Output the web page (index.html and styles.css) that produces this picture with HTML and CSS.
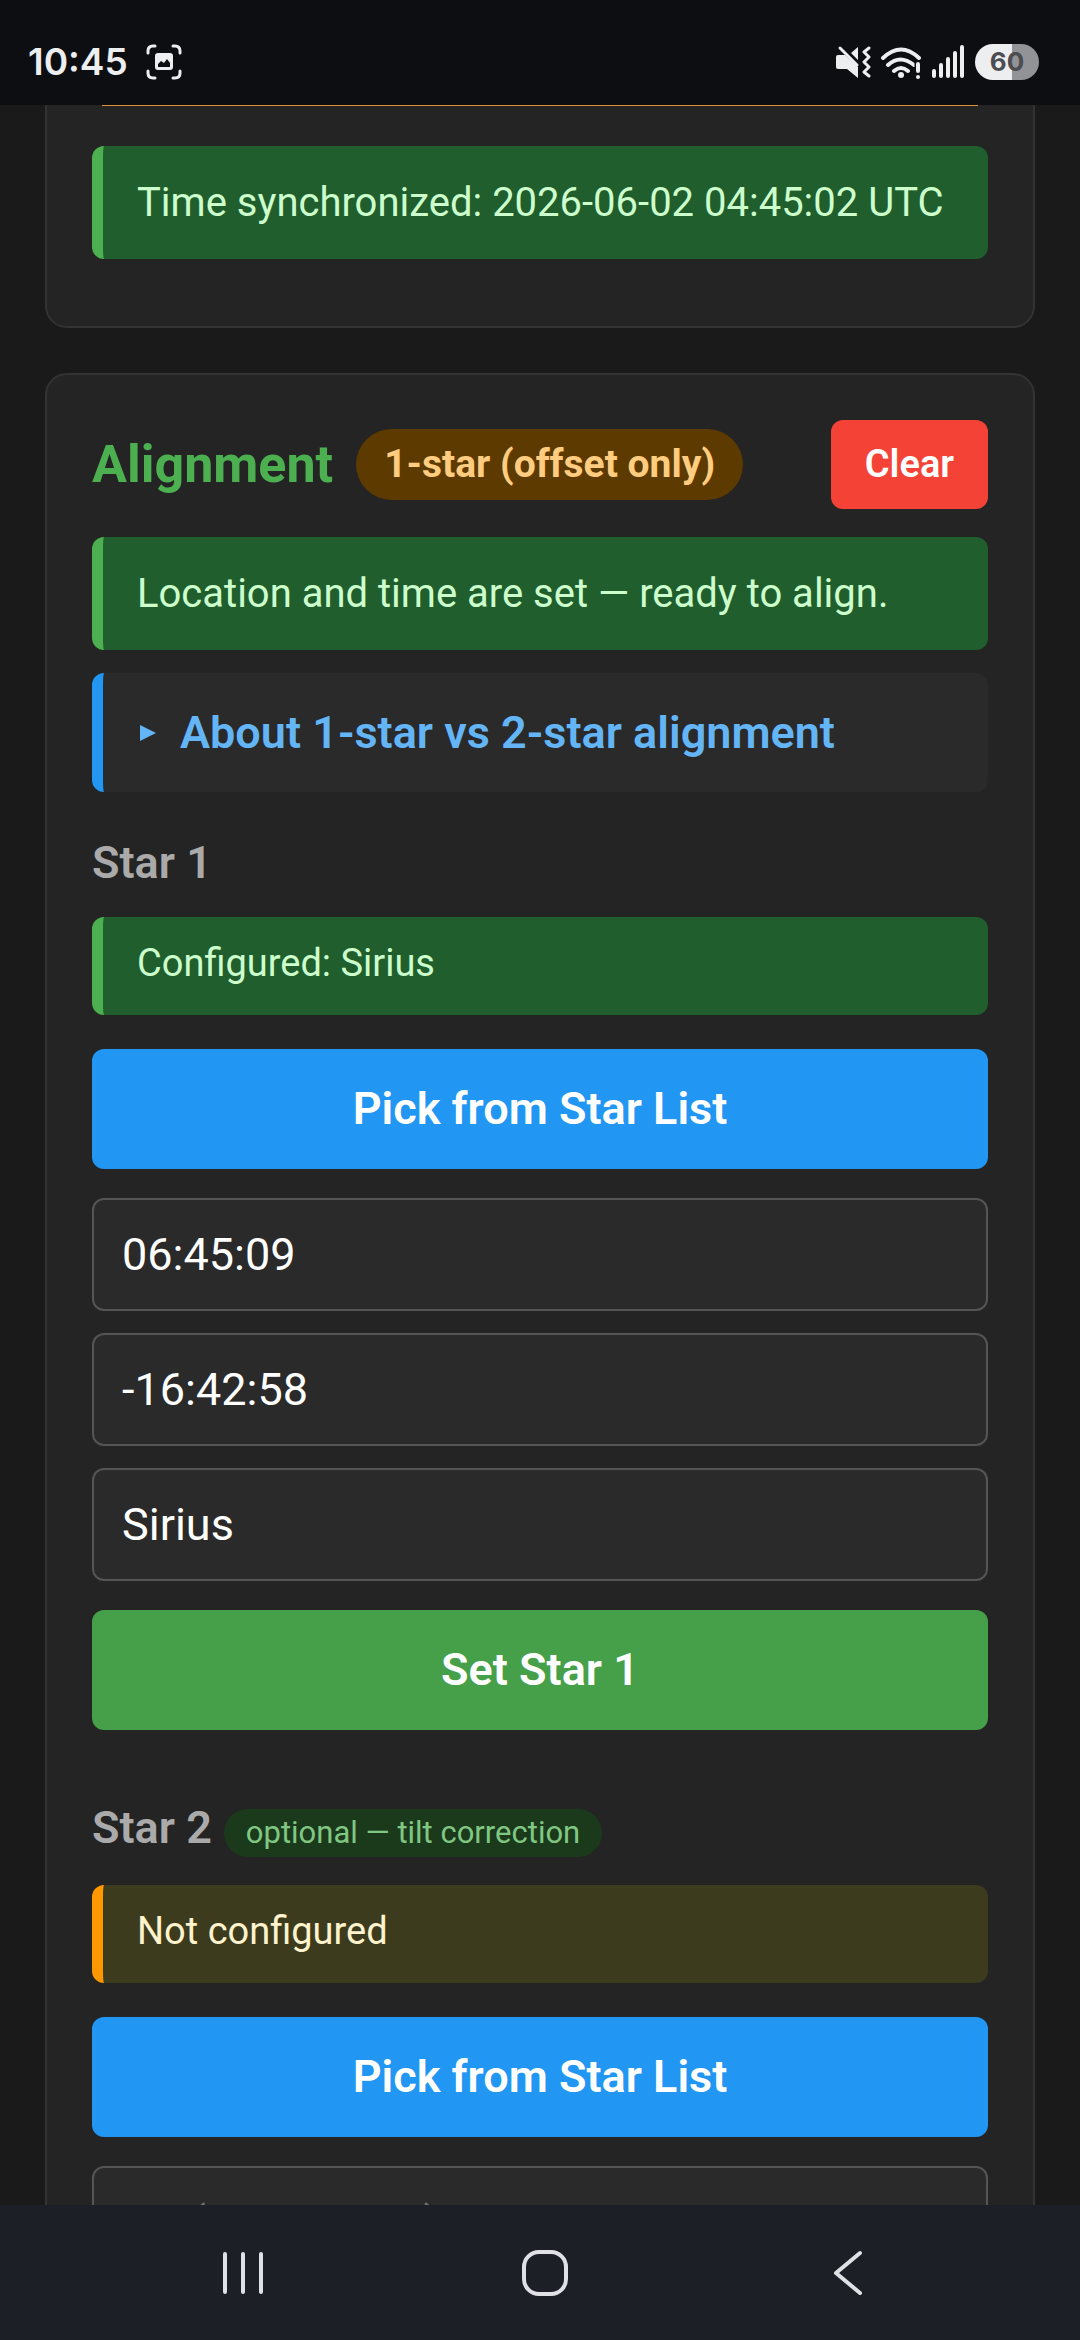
FILE: index.html
```
<!DOCTYPE html>
<html lang="en">
<head>
    <meta charset="UTF-8">
    <meta name="viewport" content="width=device-width, initial-scale=1.0">
    <title>Alignment</title>
    <link rel="stylesheet" href="styles.css">
</head>
<body>
    <header class="status-bar">
        <div class="status-left">
            <span class="clock">10:45</span>
            <svg width="36" height="36" viewBox="0 0 36 36" aria-hidden="true">
                <g fill="none" stroke="#eceef0" stroke-width="3" stroke-linecap="round">
                    <path d="M2 9V7q0-5 5-5h2M27 2h2q5 0 5 5v2M34 27v2q0 5-5 5h-2M9 34H7q-5 0-5-5v-2"/>
                </g>
                <path fill="#eceef0" fill-rule="evenodd" d="M12 9h12q3 0 3 3v11q0 3-3 3H12q-3 0-3-3V12q0-3 3-3zM12 23h12v-4l-3-4-3 4-3-2-3 3z"/>
            </svg>
        </div>
        <div class="status-right">
            <svg width="36" height="36" viewBox="0 0 36 36" aria-hidden="true">
                <path fill="#eceef0" d="M3 11h7l13 12v11l-11-9H3q-2 0-2-2V13q0-2 2-2zM16 9l7-6v13z"/>
                <path fill="none" stroke="#eceef0" stroke-width="3" stroke-linecap="round" d="M5 4l17 17"/>
                <path fill="none" stroke="#eceef0" stroke-width="3" stroke-linecap="round" stroke-linejoin="round" d="M34 4l-5 4 5 5-5 5 5 5-5 5 5 4"/>
            </svg>
            <svg width="40" height="36" viewBox="0 0 40 36" aria-hidden="true">
                <g fill="none" stroke="#eceef0" stroke-width="4" stroke-linecap="round">
                    <path d="M2 14Q20-3 38 14M7 21q12-11 26 0M13 27q7-6 14 0"/>
                </g>
                <circle cx="20" cy="31" r="3" fill="#eceef0"/>
                <path d="M37 17v18" stroke="#0d0e12" stroke-width="7"/>
                <path d="M37 20v7M37 33v0" stroke="#eceef0" stroke-width="4" stroke-linecap="round"/>
            </svg>
            <svg width="34" height="36" viewBox="0 0 34 36" aria-hidden="true">
                <path fill="none" stroke="#eceef0" stroke-width="4" stroke-linecap="round" d="M3 27v5M10 21v11M17 15v17M24 9v23M31 3v29"/>
            </svg>
            <span class="battery">60</span>
        </div>
    </header>

    <main class="content">
        <section class="card card-time">
            <div class="warning-edge"></div>
            <div class="alert alert-success">Time synchronized: 2026-06-02 04:45:02 UTC</div>
        </section>

        <section class="card">
            <div class="card-header">
                <h2>Alignment</h2>
                <span class="mode-badge">1-star (offset only)</span>
                <button type="button" class="btn-clear">Clear</button>
            </div>
            <div class="alert alert-success">Location and time are set — ready to align.</div>
            <details class="about">
                <summary>
                    <svg width="20" height="18" viewBox="0 0 20 18" aria-hidden="true"><path fill="#64b5f6" d="M3 1l16 8-16 8z"/></svg>
                    About 1-star vs 2-star alignment
                </summary>
            </details>

            <h3>Star 1</h3>
            <div class="alert alert-small alert-success">Configured: Sirius</div>
            <form class="star-form">
                <button type="button" class="btn btn-pick">Pick from Star List</button>
                <div class="fields">
                    <input type="text" aria-label="Star 1 RA" value="06:45:09">
                    <input type="text" aria-label="Star 1 Dec" value="-16:42:58">
                    <input type="text" aria-label="Star 1 name" value="Sirius">
                </div>
                <button type="button" class="btn btn-set">Set Star 1</button>
            </form>

            <h3 class="second">Star 2 <span class="optional">optional — tilt correction</span></h3>
            <div class="alert alert-small alert-warning">Not configured</div>
            <form class="star-form">
                <button type="button" class="btn btn-pick">Pick from Star List</button>
                <div class="fields">
                    <input type="text" aria-label="Star 2 RA" placeholder="RA (HH:MM:SS)">
                </div>
            </form>
        </section>
    </main>

    <nav class="nav-bar">
        <button type="button" aria-label="Recent apps">
            <svg width="48" height="48" viewBox="0 0 48 48"><path fill="none" stroke="#dfe1e4" stroke-width="4" stroke-linecap="round" d="M6 5v38M24 5v38M42 5v38"/></svg>
        </button>
        <button type="button" aria-label="Home">
            <svg width="48" height="48" viewBox="0 0 48 48"><rect x="3" y="3" width="42" height="42" rx="15" fill="none" stroke="#dfe1e4" stroke-width="4"/></svg>
        </button>
        <button type="button" aria-label="Back">
            <svg width="48" height="48" viewBox="0 0 48 48"><path fill="none" stroke="#dfe1e4" stroke-width="4" stroke-linecap="round" stroke-linejoin="round" d="M36 4L12 24l24 20"/></svg>
        </button>
    </nav>
</body>
</html>
```

FILE: styles.css
```
* {
    box-sizing: border-box;
}

body {
    font-family: Roboto, sans-serif;
    background-color: #1a1a1a;
    color: #fff;
    margin: 0;
    height: 100vh;
    display: flex;
    flex-direction: column;
    overflow: hidden;
}

h2, h3 {
    margin: 0;
    font-weight: 600;
}

button {
    font-family: inherit;
    font-weight: 600;
    color: white;
    border: none;
    cursor: pointer;
}

svg {
    display: block;
    flex-shrink: 0;
}

/* Phone status bar */
.status-bar {
    display: flex;
    justify-content: space-between;
    align-items: center;
    height: 105px;
    flex-shrink: 0;
    padding: 18px 41px 0 28px;
    background-color: #0d0e12;
    color: #eceef0;
}

.status-left {
    display: flex;
    align-items: center;
    gap: 18px;
}

.clock {
    font-family: Inter, sans-serif;
    font-size: 37px;
    font-weight: 600;
}

.status-right {
    display: flex;
    align-items: center;
    gap: 10px;
}

.battery {
    width: 64px;
    border-radius: 18px;
    background: linear-gradient(to right, #eceef0 58%, #929397 58%);
    color: #4c4d50;
    font-family: Inter, sans-serif;
    font-size: 26px;
    font-weight: 700;
    line-height: 36px;
    text-align: center;
}

/* Page */
.content {
    flex: 1;
    min-height: 0;
    overflow: hidden;
    padding: 0 45px;
}

.card {
    background-color: #242424;
    border: 2px solid #333;
    border-radius: 22px;
    padding: 45px;
    margin-bottom: 45px;
}

.card-time {
    border-top: none;
    border-radius: 0 0 22px 22px;
    padding-top: 0;
    padding-bottom: 67px;
}

.warning-edge {
    height: 1px;
    margin: 0 10px 40px;
    background-color: #e0913a;
}

.card-header {
    display: flex;
    align-items: center;
    gap: 23px;
    margin-bottom: 28px;
}

h2 {
    color: #4caf50;
    font-size: 52px;
    font-weight: 700;
}

.mode-badge {
    background-color: #5c3a00;
    color: #ffcc80;
    font-size: 39px;
    font-weight: 700;
    line-height: 49px;
    padding: 11px 28px;
    border-radius: 36px;
}

.btn-clear {
    margin-left: auto;
    background-color: #f44336;
    font-size: 38px;
    line-height: 45px;
    padding: 22px 34px;
    border-radius: 12px;
}

.alert {
    border-left: 11px solid;
    border-radius: 12px;
    padding: 32px 34px;
    font-size: 40px;
    line-height: 49px;
}

.alert-success {
    background-color: #215e2e;
    border-color: #4caf50;
    color: #ccffcc;
}

.alert-warning {
    background-color: #3d3b1e;
    border-color: #ff9800;
    color: #fff3cd;
}

.alert-small {
    font-size: 38px;
    padding: 22px 34px 27px;
}

.about {
    margin-top: 23px;
    padding: 34px;
    background-color: #2a2a2a;
    border-left: 11px solid #2196f3;
    border-radius: 12px;
}

.about summary {
    display: flex;
    align-items: center;
    gap: 23px;
    color: #64b5f6;
    font-size: 45px;
    font-weight: 600;
    line-height: 51px;
    cursor: pointer;
}

h3 {
    display: flex;
    align-items: baseline;
    gap: 12px;
    color: #aaa;
    font-size: 45px;
    line-height: 53px;
    margin: 44px 0 28px;
}

h3.second {
    margin-top: 71px;
}

.optional {
    background-color: #1b3a1b;
    color: #81c784;
    font-size: 31px;
    font-weight: 400;
    line-height: 36px;
    padding: 6px 22px;
    border-radius: 24px;
}

.star-form {
    display: flex;
    flex-direction: column;
    gap: 29px;
    margin-top: 34px;
}

.btn {
    width: 100%;
    font-size: 45px;
    line-height: 52px;
    padding: 34px;
    border-radius: 12px;
}

.btn-pick {
    background-color: #2196f3;
}

.btn-set {
    background-color: #46a049;
}

.fields {
    display: flex;
    flex-direction: column;
    gap: 22px;
}

input[type="text"] {
    width: 100%;
    height: 113px;
    padding: 0 28px;
    background-color: #2a2a2a;
    border: 2px solid #555;
    border-radius: 12px;
    color: white;
    font-family: inherit;
    font-size: 45px;
}

input::placeholder {
    color: #757575;
}

/* Phone navigation buttons */
.nav-bar {
    display: grid;
    grid-template-columns: repeat(3, 1fr);
    height: 135px;
    flex-shrink: 0;
    padding: 0 81px 0 92px;
    background-color: #1c1f26;
}

.nav-bar button {
    display: flex;
    align-items: center;
    justify-content: center;
    background: none;
}
```
